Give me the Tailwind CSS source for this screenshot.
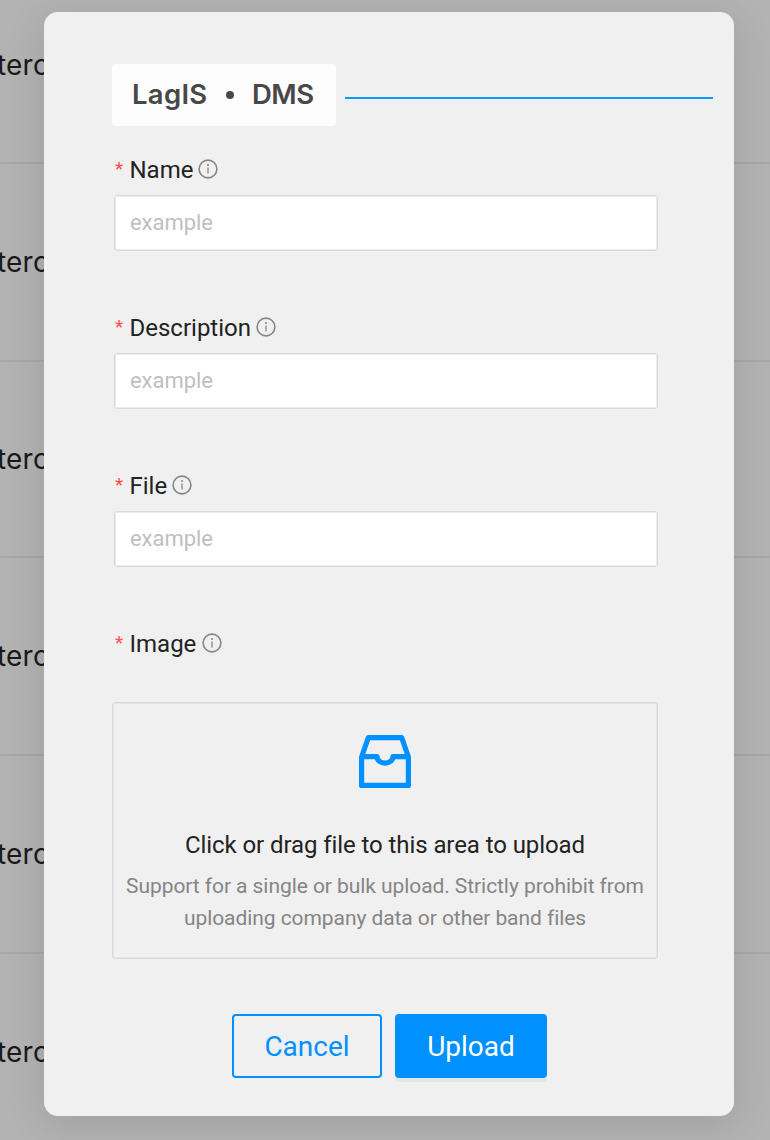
<!DOCTYPE html>
<html lang="en">
<head>
<meta charset="utf-8">
<title>LagIS DMS</title>
<script src="https://cdn.jsdelivr.net/npm/@tailwindcss/browser@4"></script>
</head>
<body class="relative h-[1140px] w-[770px] overflow-hidden bg-[#b3b3b3] font-['Roboto',sans-serif] text-[#222]">
<svg class="hidden"><symbol id="info" viewBox="0 0 20 20"><circle cx="10" cy="10" r="8.9" fill="none" stroke="#858585" stroke-width="1.6"/><circle cx="10" cy="6.1" r="1" fill="#858585"/><path d="M10 8.6v6" stroke="#858585" stroke-width="1.3"/></symbol></svg>

<!-- Table rows behind the dialog -->
<div class="absolute inset-0 grid grid-rows-[164px_198px_196px_198px_198px_198px] font-['Inter',sans-serif] text-[28px] leading-[40px] text-[#1a1a1a]">
  <div class="border-b-2 border-[#a7a7a7] pt-[45px] -indent-[3px] tracking-[0.2px]">tero</div>
  <div class="border-b-2 border-[#a7a7a7] pt-[78px] -indent-[3px] tracking-[0.2px]">tero</div>
  <div class="border-b-2 border-[#a7a7a7] pt-[77px] -indent-[3px] tracking-[0.2px]">tero</div>
  <div class="border-b-2 border-[#a7a7a7] pt-[78px] -indent-[3px] tracking-[0.2px]">tero</div>
  <div class="border-b-2 border-[#a7a7a7] pt-[78px] -indent-[3px] tracking-[0.2px]">tero</div>
  <div class="pt-[78px] -indent-[3px] tracking-[0.2px]">tero</div>
</div>

<main class="relative ml-[44px] mt-[12px] flex h-[1104px] w-[690px] flex-col rounded-[14px] bg-[#f0f0f0] pl-[68px] pt-[52px] shadow-[0_8px_40px_rgba(0,0,0,0.12)]">
  <header class="flex h-[62px] items-center">
    <h1 class="flex h-[62px] w-[224px] items-center rounded bg-[#fdfdfd] pl-[20px] font-['Inter',sans-serif] text-[27.5px] font-semibold leading-none text-[#484848]">
      <span class="w-[93.5px] tracking-[0.3px]">LagIS</span><span class="mr-[18px] size-[8.5px] rounded-full bg-[#484848]"></span><span class="tracking-[-0.5px]">DMS</span>
    </h1>
    <div class="ml-[9px] mt-[6px] h-[2px] w-[368px] bg-[#0b9cfb]"></div>
  </header>

  <form class="mt-[25px] flex w-[546px] flex-col">
    <div class="flex h-[158px] flex-col pl-[2px]">
      <label class="flex h-[38px] items-center text-[24px] leading-[38px]"><span class="mb-[2px] w-[15.5px] pl-px text-[19px] text-[#ff4d4f]">*</span>Name<svg class="mb-[2px] ml-[5px] size-5"><use href="#info"/></svg></label>
      <input class="mt-[6px] h-[56px] w-[544px] rounded-[3px] border border-[#d9d9d9] bg-white px-[15px] pb-[2px] text-[22px] tracking-[-0.05px] shadow-[inset_0_0_0_1px_#ececec] placeholder:text-[#bfbfbf]" placeholder="example">
    </div>
    <div class="flex h-[158px] flex-col pl-[2px]">
      <label class="flex h-[38px] items-center text-[24px] leading-[38px]"><span class="mb-[2px] w-[15.5px] pl-px text-[19px] text-[#ff4d4f]">*</span>Description<svg class="mb-[2px] ml-[5px] size-5"><use href="#info"/></svg></label>
      <input class="mt-[6px] h-[56px] w-[544px] rounded-[3px] border border-[#d9d9d9] bg-white px-[15px] pb-[2px] text-[22px] tracking-[-0.05px] shadow-[inset_0_0_0_1px_#ececec] placeholder:text-[#bfbfbf]" placeholder="example">
    </div>
    <div class="flex h-[158px] flex-col pl-[2px]">
      <label class="flex h-[38px] items-center text-[24px] leading-[38px]"><span class="mb-[2px] w-[15.5px] pl-px text-[19px] text-[#ff4d4f]">*</span>File<svg class="mb-[2px] ml-[5px] size-5"><use href="#info"/></svg></label>
      <input class="mt-[6px] h-[56px] w-[544px] rounded-[3px] border border-[#d9d9d9] bg-white px-[15px] pb-[2px] text-[22px] tracking-[-0.05px] shadow-[inset_0_0_0_1px_#ececec] placeholder:text-[#bfbfbf]" placeholder="example">
    </div>
    <div class="flex flex-col">
      <label class="flex h-[38px] items-center pl-[2px] text-[24px] leading-[38px]"><span class="mb-[2px] w-[15.5px] pl-px text-[19px] text-[#ff4d4f]">*</span>Image<svg class="mb-[2px] ml-[6px] size-5"><use href="#info"/></svg></label>
      <div class="mt-[39px] flex h-[257px] flex-col items-center rounded-[3px] border border-[#d9d9d9] pt-[32px] text-center shadow-[inset_0_0_0_1px_#e6e6e6]">
        <svg class="h-[54px] w-[54px]" viewBox="0 0 54 54" fill="none" stroke="#0091ff" stroke-width="5.2" stroke-linejoin="round"><path d="M3.6 22 10.3 2.6h33.4L50.400 22V50.400h-46.800z"/><path d="M3.600 21.700H19a8 6.500 0 0 0 16 0H50.400"/></svg>
        <p class="mt-[38px] text-[24px] leading-[36px] tracking-[-0.08px]">Click or drag file to this area to upload</p>
        <p class="mt-[7px] text-[21px] leading-[32px] tracking-[-0.07px] text-[#858585]">Support for a single or bulk upload. Strictly prohibit from<br>uploading company data or other band files</p>
      </div>
    </div>
  </form>

  <footer class="mt-[55px] flex gap-[13px] pl-[120px] text-[28px] leading-none">
    <button class="h-[64px] w-[150px] rounded border-2 border-[#0091ff] pt-[2px] text-[#0091ff]">Cancel</button>
    <button class="h-[64px] w-[152px] rounded bg-[#0091ff] pt-[2px] text-white shadow-[0_4px_0_rgba(0,0,0,0.045)]">Upload</button>
  </footer>
</main>
</body>
</html>
